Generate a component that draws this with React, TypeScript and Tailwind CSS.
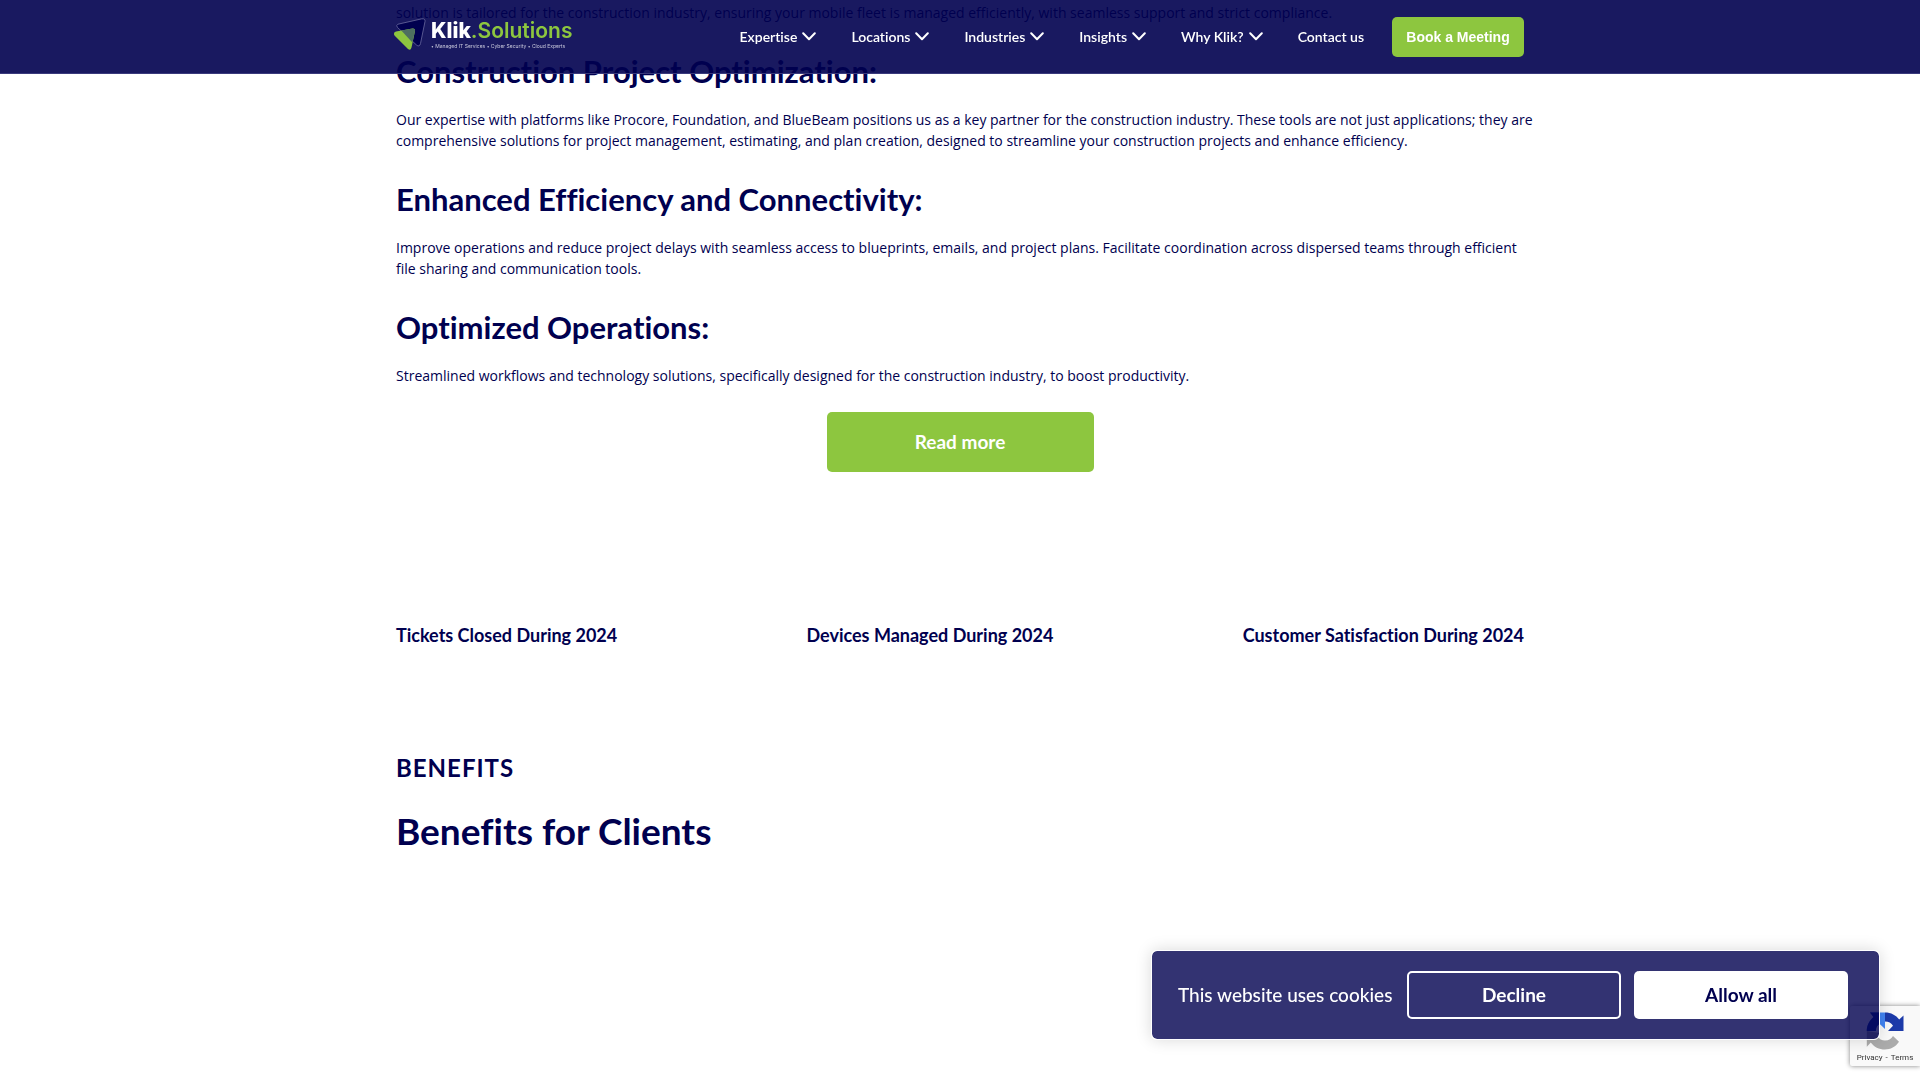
import { Fragment } from "react";

const menus = ["Expertise", "Locations", "Industries", "Insights", "Why Klik?"];

const sections = [
  {
    title: "Construction Project Optimization:",
    lines: [
      "Our expertise with platforms like Procore, Foundation, and BlueBeam positions us as a key partner for the construction industry. These tools are not just applications; they are",
      "comprehensive solutions for project management, estimating, and plan creation, designed to streamline your construction projects and enhance efficiency.",
    ],
  },
  {
    title: "Enhanced Efficiency and Connectivity:",
    lines: [
      "Improve operations and reduce project delays with seamless access to blueprints, emails, and project plans. Facilitate coordination across dispersed teams through efficient",
      "file sharing and communication tools.",
    ],
  },
  {
    title: "Optimized Operations:",
    lines: [
      "Streamlined workflows and technology solutions, specifically designed for the construction industry, to boost productivity.",
    ],
  },
];

const stats = [
  "Tickets Closed During 2024",
  "Devices Managed During 2024",
  "Customer Satisfaction During 2024",
];

function Chevron() {
  return (
    <svg width="14" height="9" viewBox="0 0 14 9" fill="none" aria-hidden="true">
      <path d="M1.2 1.2 7 7.2l5.800-6" stroke="#fff" strokeWidth="2" strokeLinecap="round" strokeLinejoin="round" />
    </svg>
  );
}

function Logo() {
  return (
    <a href="#" className="-ml-[3px] flex items-center gap-[5px] pb-1 font-[Inter,sans-serif]" aria-label="Klik Solutions home">
      <svg width="33" height="33" viewBox="0 0 33 33" fill="none" aria-hidden="true">
        <path d="M5 6.200 28.500.9Q32.500.2 32 3.500L27.500 25.500Q26.500 29.500 23.500 27L4.500 9.500Q2.500 7.200 5 6.200Z" fill="#00004f" stroke="#6a6a9e" strokeWidth="0.8" />
        <path d="M1 15.500Q1 14 3 13.600L19.500 10.400Q22.500 10.200 22 13L18.500 29.500Q17.500 33 15 31L1.500 17.500Q.8 16.500 1 15.500Z" fill="#8dc63f" />
        <path d="M8.300 12.600 19.500 10.400Q22.500 10.200 22 13L19.400 24.500Z" fill="#4d6f60" />
      </svg>
      <span className="flex flex-col">
        <span className="text-[21px] leading-[22px] font-extrabold text-white">
          Klik<span className="font-semibold text-[#8dc63f]">.Solutions</span>
        </span>
        <span className="text-[5px] leading-[8px] whitespace-nowrap text-[#c8c8dc]">
          • Managed IT Services • Cyber Security • Cloud Experts
        </span>
      </span>
    </a>
  );
}

function Header() {
  return (
    <header className="fixed inset-x-0 top-0 z-10 border-b border-[#3a3a7c] bg-[#00004f]/90">
      <div className="mx-auto flex h-[73px] max-w-[1128px] items-center justify-between">
        <Logo />
        <nav className="flex items-center gap-[35px] text-[14px] leading-5 font-semibold text-white">
          {menus.map((m) => (
            <button key={m} type="button" className="flex items-center gap-[5px]">
              {m}
              <Chevron />
            </button>
          ))}
          <span className="flex items-center gap-7">
            <a href="#contact">Contact us</a>
            <a
              href="#meeting"
              className="flex h-10 w-[132px] items-center justify-center rounded-[5px] bg-[#8dc63f] font-['Liberation_Sans',sans-serif] font-bold"
            >
              Book a Meeting
            </a>
          </span>
        </nav>
      </div>
    </header>
  );
}

function Copy({ lines }: { lines: string[] }) {
  return (
    <p className="-mr-6 font-['Open_Sans',sans-serif] text-[14px] leading-[21px]">
      {lines.map((line, i) => (
        <Fragment key={line}>
          {i > 0 && <br />}
          {line}
        </Fragment>
      ))}
    </p>
  );
}

function Recaptcha() {
  return (
    <aside className="fixed right-0 bottom-[14px] z-20 flex h-[60px] w-[70px] flex-col items-center rounded-l-[2px] bg-[#f9f9f9] pt-[6px] shadow-[0_0_5px_gray]">
      <svg width="38" height="38" viewBox="0 0 38 38" aria-hidden="true">
        <path d="M19 .5C25 .5 30 3.200 33.200 7.500L37.500 3.500V19H22l5-5.200C25.500 11 22.500 9.500 19 9.500Z" fill="#1c3aa9" />
        <path d="M19 .5V17l-5.500-5.200C11 13.500 9.800 16 9.800 19H.8C.8 13.500 3.500 8.500 7.500 5L4 .5Z" fill="#4285f4" />
        <path d="M19 .5H4L7.500 5C3.500 8.500.8 13.500.8 19h9c0-3 1.200-5.500 3.700-7.200L14 12V.5Z" fill="#1c3aa9" />
        <path d="M.8 19 .8 34.800 4.800 30.500C8 35 13 37.500 19 37.500c5.500 0 10.500-2.500 14-7.700l-6-5.800c-1.500 2.500-4 4.500-8 4.500-3 0-6-1.500-7.800-4.300L14 21Z" fill="#ababab" />
      </svg>
      <div className="flex gap-[3px] font-[Roboto,sans-serif] text-[8px] leading-[16px] text-[#333]">
        <a href="#privacy">Privacy</a>
        <span>-</span>
        <a href="#terms">Terms</a>
      </div>
    </aside>
  );
}

function CookieBanner() {
  return (
    <div
      role="dialog"
      aria-label="Cookies"
      className="fixed right-[40px] bottom-[40px] z-30 flex w-[729px] items-center rounded-md border border-white bg-[#00004f]/80 bg-clip-padding py-5 pr-[31px] pl-[26px] text-[19px] leading-6 text-white shadow-[0_0_16px_rgba(0,0,0,0.15)]"
    >
      <p className="flex-1 font-medium whitespace-nowrap">This website uses cookies</p>
      <div className="flex gap-[13px]">
        <button type="button" className="h-12 w-[214px] rounded-[5px] border-2 border-white font-bold">
          Decline
        </button>
        <button type="button" className="h-12 w-[214px] rounded-[5px] bg-white font-bold text-[#00004f]">
          Allow all
        </button>
      </div>
    </div>
  );
}

export default function App() {
  return (
    <div className="min-h-screen overflow-x-clip bg-white font-[Lato,sans-serif] text-[#00004f] [font-variant-ligatures:none]">
      <Header />
      <main className="mx-auto max-w-[1128px] pt-[2px]">
        <Copy
          lines={[
            "solution is tailored for the construction industry, ensuring your mobile fleet is managed efficiently, with seamless support and strict compliance.",
          ]}
        />
        {sections.map((s) => (
          <section key={s.title} className="pt-7">
            <h2 className="mb-[18px] text-[31px] leading-10 font-bold">{s.title}</h2>
            <Copy lines={s.lines} />
          </section>
        ))}
        <a
          href="#more"
          className="mx-auto mt-[26px] flex h-[60px] w-[267px] items-center justify-center rounded-[5px] bg-[#8dc63f] text-[19px] font-bold text-white"
        >
          Read more
        </a>
        <ul className="mt-[151px] flex justify-between text-[18px] leading-6 font-bold">
          {stats.map((s) => (
            <li key={s}>{s}</li>
          ))}
        </ul>
        <section className="pt-[105px]">
          <p className="text-[24px] leading-8 font-bold tracking-[1px]">BENEFITS</p>
          <h2 className="mt-[23px] text-[37px] leading-12 font-bold">Benefits for Clients</h2>
        </section>
      </main>
      <Recaptcha />
      <CookieBanner />
    </div>
  );
}
